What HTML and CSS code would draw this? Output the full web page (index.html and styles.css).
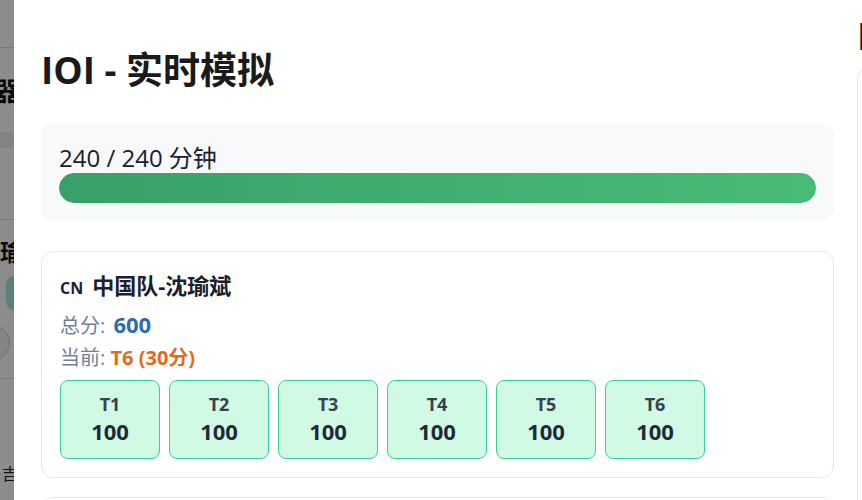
FILE: index.html
```html
<!DOCTYPE html>
<html lang="zh-CN">
<head>
<meta charset="utf-8">
<title>IOI - 实时模拟</title>
<link rel="stylesheet" href="styles.css">
</head>
<body>
<div class="page">
  <aside class="side">
    <div class="side-row side-top"></div>
    <div class="side-row side-head"><span class="side-title">服务器</span></div>
    <div class="side-row side-band"></div>
    <div class="side-row side-blank"></div>
    <div class="side-row side-team">
      <span class="side-name">沈瑜</span>
      <span class="side-btn">查看</span>
      <span class="side-avatar"></span>
    </div>
    <div class="side-row side-foot"><span class="side-cell">吉</span></div>
  </aside>
</div>
<div class="overlay"></div>
<div class="modal">
  <section class="col col-main">
    <h1 class="title">IOI - 实时模拟</h1>
    <div class="progress">
      <div class="progress-text">240 / 240 分钟</div>
      <div class="bar"><div class="bar-fill" style="width:100%"></div></div>
    </div>
    <div class="card">
      <div class="card-title"><span class="flag">CN</span>中国队-沈瑜斌</div>
      <div class="score"><span class="label">总分: </span><span class="score-val">600</span></div>
      <div class="current"><span class="label">当前: </span><span class="current-val">T6 (30分)</span></div>
      <div class="tasks">
        <div class="task"><span class="task-name">T1</span><span class="task-score">100</span></div>
        <div class="task"><span class="task-name">T2</span><span class="task-score">100</span></div>
        <div class="task"><span class="task-name">T3</span><span class="task-score">100</span></div>
        <div class="task"><span class="task-name">T4</span><span class="task-score">100</span></div>
        <div class="task"><span class="task-name">T5</span><span class="task-score">100</span></div>
        <div class="task"><span class="task-name">T6</span><span class="task-score">100</span></div>
      </div>
    </div>
    <div class="card">
      <div class="card-title"><span class="flag">CN</span>中国队-选手</div>
    </div>
  </section>
  <section class="col col-side">
    <h2 class="title">IOI 排行榜</h2>
    <div class="card card-tall"></div>
  </section>
</div>
</body>
</html>
```

FILE: styles.css
```css
* { box-sizing: border-box; }
html, body {
  margin: 0;
  padding: 0;
  width: 862px;
  height: 500px;
  overflow: hidden;
  background: #ffffff;
  font-family: "Open Sans", "Noto Sans CJK SC", sans-serif;
  color: #1a202c;
}

/* background page (dimmed) */
.page {
  display: flex;
  height: 500px;
}
.side {
  width: 14px;
  display: flex;
  flex-direction: column;
  overflow: hidden;
}
.side-row {
  display: flex;
  justify-content: flex-end;
  flex-shrink: 0;
}
.side-top {
  height: 48px;
  border-bottom: 1px solid #d9d9d9;
}
.side-head {
  height: 84px;
  align-items: center;
}
.side-title {
  font-size: 26px;
  font-weight: 700;
  white-space: nowrap;
  color: #111;
  margin-right: -6px;
}
.side-band {
  height: 16px;
  background: #eeeeee;
}
.side-blank {
  height: 72px;
  border-bottom: 1px solid #d9d9d9;
}
.side-team {
  height: 159px;
  flex-direction: column;
  justify-content: flex-start;
  align-items: flex-end;
  border-bottom: 1px solid #d9d9d9;
  padding-top: 17px;
}
.side-name {
  font-size: 24px;
  font-weight: 700;
  white-space: nowrap;
  color: #111;
  margin-right: -10px;
  line-height: 30px;
}
.side-btn {
  margin-top: 8px;
  width: 60px;
  height: 36px;
  border-radius: 10px;
  background: #a6e9dd;
  color: transparent;
  margin-right: -52px;
}
.side-avatar {
  margin-top: 14px;
  width: 36px;
  height: 36px;
  border-radius: 50%;
  background: #f3f1ef;
  border: 1px solid #c8c8c8;
  margin-right: 4px;
}
.side-foot {
  padding-top: 82px;
}
.side-cell {
  font-size: 16px;
  color: #222;
  white-space: nowrap;
  margin-right: -4px;
}

.overlay {
  position: fixed;
  inset: 0;
  background: rgba(0, 0, 0, 0.45);
}

/* modal */
.modal {
  position: fixed;
  top: 0;
  left: 14px;
  width: 1200px;
  height: 500px;
  background: #ffffff;
  padding: 14px 27px 0;
  display: flex;
  align-items: flex-start;
  gap: 23px;
  overflow: hidden;
}
.col { flex-shrink: 0; }
.col-main { width: 793px; }
.col-side { width: 340px; }

.title {
  margin: 0;
  font-size: 37px;
  line-height: 44px;
  font-weight: 700;
  color: #1a1a1a;
}
.col-main .title { margin: 34px 0 32px; }
.col-side .title { margin: 0 0 9px; }

.progress {
  background: #f8f9fb;
  border-radius: 12px;
  padding: 18px 18px 17px;
}
.progress-text {
  font-size: 24px;
  line-height: 31px;
  color: #1a202c;
}
.bar {
  height: 30px;
  border-radius: 15px;
  background: #e2e8f0;
  overflow: hidden;
}
.bar-fill {
  height: 100%;
  border-radius: 15px;
  background: linear-gradient(90deg, #38a169, #48bb78);
}

.card {
  margin-top: 31px;
  border: 1px solid #e2e8f0;
  border-radius: 12px;
  padding: 18px 18px 18px;
  background: #fff;
}
.card + .card { margin-top: 19px; }
.card-tall { height: 600px; margin-top: 0; }

.card-title {
  font-size: 22px;
  line-height: 30px;
  font-weight: 700;
  color: #1a202c;
  display: flex;
  align-items: baseline;
}
.flag {
  font-size: 16px;
  font-weight: 700;
  margin-right: 9px;
}
.score {
  margin-top: 6px;
  line-height: 30px;
}
.label {
  font-size: 20px;
  color: #718096;
}
.score-val {
  font-size: 22px;
  font-weight: 700;
  color: #2b6cb0;
  margin-left: 3px;
}
.current {
  margin-top: 2px;
  line-height: 28px;
}
.current-val {
  font-size: 20px;
  font-weight: 700;
  color: #dd6b20;
}
.tasks {
  margin-top: 7px;
  display: flex;
  gap: 9px;
}
.task {
  width: 100px;
  height: 79px;
  border: 1px solid #34d399;
  border-radius: 8px;
  background: #d1fae5;
  display: flex;
  flex-direction: column;
  align-items: center;
  justify-content: center;
  padding-bottom: 1px;
}
.task-name {
  font-size: 18px;
  line-height: 25px;
  font-weight: 700;
  color: #374151;
}
.task-score {
  font-size: 22px;
  line-height: 29px;
  font-weight: 700;
  color: #1f2937;
}
```
